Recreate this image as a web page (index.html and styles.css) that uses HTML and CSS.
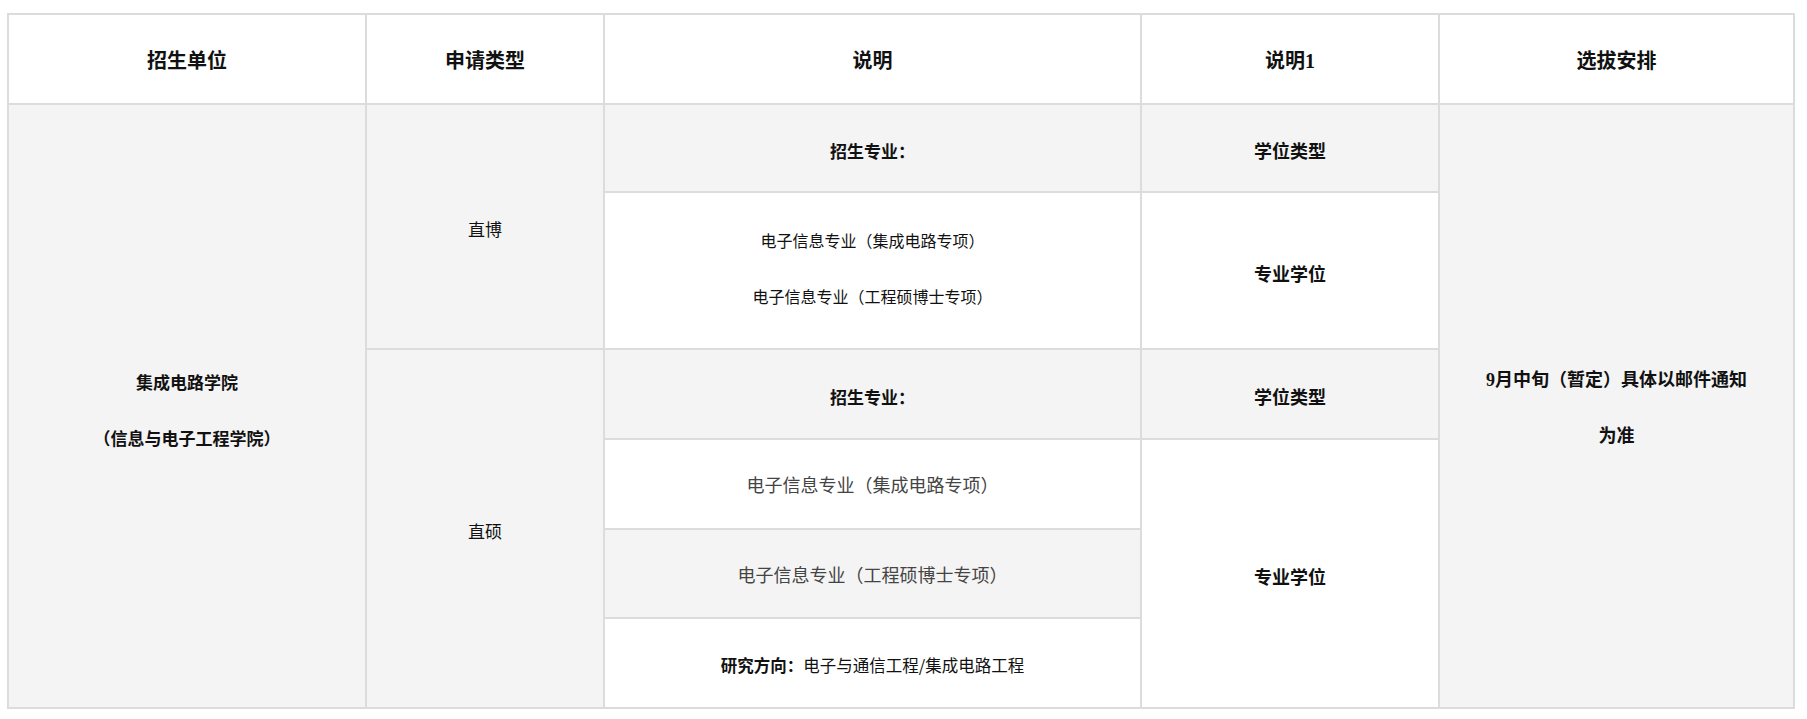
FILE: index.html
```html
<!DOCTYPE html>
<html lang="zh-CN">
<head>
<meta charset="utf-8">
<title>招生信息</title>
<link rel="stylesheet" href="styles.css">
</head>
<body>
<div class="wrap">
<table class="admit">
  <colgroup>
    <col class="c1"><col class="c2"><col class="c3"><col class="c4"><col class="c5">
  </colgroup>
  <thead>
    <tr class="h-head">
      <th>招生单位</th>
      <th>申请类型</th>
      <th>说明</th>
      <th>说明1</th>
      <th>选拔安排</th>
    </tr>
  </thead>
  <tbody>
    <tr class="odd h-88">
      <td rowspan="6" class="strong sans unit"><p>集成电路学院</p><p>（信息与电子工程学院）</p></td>
      <td rowspan="2" class="plain">直博</td>
      <td class="strong">招生专业：</td>
      <td class="strong big">学位类型</td>
      <td rowspan="6" class="strong big"><p>9月中旬（暂定）具体以邮件通知</p><p>为准</p></td>
    </tr>
    <tr class="even h-157">
      <td class="sans list"><p>电子信息专业（集成电路专项）</p><p>电子信息专业（工程硕博士专项）</p></td>
      <td class="strong big">专业学位</td>
    </tr>
    <tr class="odd h-90">
      <td rowspan="4" class="plain">直硕</td>
      <td class="strong">招生专业：</td>
      <td class="strong big">学位类型</td>
    </tr>
    <tr class="even h-90">
      <td class="light">电子信息专业（集成电路专项）</td>
      <td rowspan="3" class="strong big">专业学位</td>
    </tr>
    <tr class="odd h-89">
      <td class="light">电子信息专业（工程硕博士专项）</td>
    </tr>
    <tr class="even h-90">
      <td class="research"><span class="strong">研究方向：</span><span class="sans">电子与通信工程/集成电路工程</span></td>
    </tr>
  </tbody>
</table>
</div>
</body>
</html>
```
FILE: styles.css
```css
html, body {
  margin: 0;
  padding: 0;
  background: #ffffff;
}

.wrap {
  padding: 13px 0 0 7px;
}

.admit {
  width: 1788px;
  table-layout: fixed;
  border-collapse: separate;
  border-spacing: 0;
  border: 1px solid #dcdcdc;
  font-family: "Liberation Serif", "Noto Sans CJK SC", serif;
  font-size: 17px;
  color: #111;
}

.c1 { width: 358px; }
.c2 { width: 238px; }
.c3 { width: 537px; }
.c4 { width: 298px; }
.c5 { width: 355px; }

.admit th,
.admit td {
  box-sizing: border-box;
  border: 1px solid #dcdcdc;
  padding: 4px 10px 0;
  text-align: center;
  vertical-align: middle;
}

.admit th {
  padding: 0 10px;
  font-size: 20px;
  font-weight: 700;
  background: #ffffff;
}

.admit p {
  margin: 0;
  line-height: 56px;
}

.h-head { height: 90px; }
.h-88 { height: 88px; }
.h-157 { height: 157px; }
.h-90 { height: 90px; }
.h-89 { height: 89px; }

.odd > td { background: #f4f4f4; }
.even > td { background: #ffffff; }

.strong { font-weight: 700; }
.plain { font-weight: 400; padding-top: 7px; }
.big { font-size: 18px; }
.sans {
  font-family: "Noto Sans CJK SC", sans-serif;
}
td.sans { font-weight: 400; }
td.strong.sans { font-weight: 700; }

.admit td.unit { padding-top: 8px; }
.admit td.list {
  font-size: 16px;
  padding: 0 10px 5px;
}
.admit td.light {
  font-weight: 400;
  font-size: 18px;
  color: #444;
  padding-top: 0;
}
.admit td.research { font-size: 16.5px; }
```
